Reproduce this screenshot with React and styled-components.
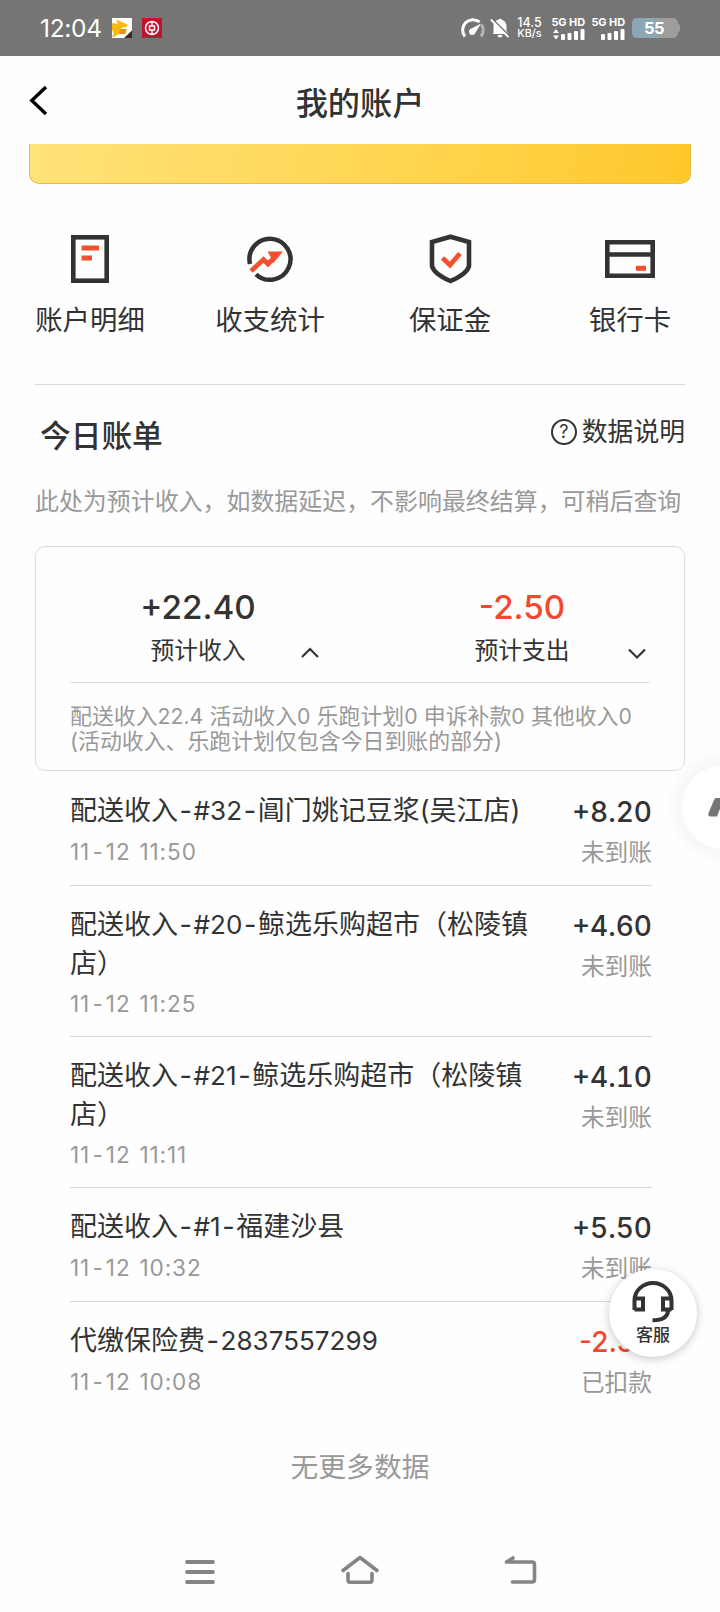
import React from 'react'
import styled, { createGlobalStyle } from 'styled-components'

const GlobalStyle = createGlobalStyle`
	* {
		box-sizing: border-box;
	}
	body {
		margin: 0;
		background: #fefefe;
		color: #333;
		font-family: Inter, 'Noto Sans CJK SC', sans-serif;
	}
	svg {
		display: block;
		flex: none;
	}
`

const Screen = styled.div`
	position: relative;
	display: flex;
	flex-direction: column;
	width: 720px;
	height: 1612px;
	overflow: hidden;
`

const StatusBar = styled.div`
	display: flex;
	align-items: center;
	flex: none;
	height: 56px;
	padding: 0 40px;
	background: #757575;
	color: #fff;
`

const Clock = styled.div`
	width: 72px;
	font-size: 24.5px;
	letter-spacing: -0.3px;
`

const AppIcons = styled.div`
	display: flex;
	gap: 10px;
	flex: 1;
`

const StatusIcons = styled.div`
	display: flex;
	align-items: center;
`

const Bell = styled.svg`
	margin-left: 5px;
`

const Speed = styled.div`
	width: 26px;
	margin: 0 9.5px 0 7px;
	font-size: 12.5px;
	font-weight: 500;
	line-height: 11px;
	text-align: center;
	white-space: nowrap;

	div + div {
		font-size: 10.8px;
	}
`

const Sim = styled.div`
	display: flex;
	flex-direction: column;
	align-items: flex-end;
	width: 33px;
	margin-right: 7px;
	font-size: 11px;
	font-weight: 700;
	letter-spacing: -0.1px;
	line-height: 11px;
	white-space: nowrap;
`

const Battery = styled.div`
	display: flex;
	align-items: center;
	justify-content: center;
	width: 46px;
	height: 20px;
	padding-right: 2px;
	border-radius: 5px;
	background: linear-gradient(90deg, #8ba7b5 55%, #9d9d9d 55%);
	font-size: 16.5px;
	font-weight: 700;
	letter-spacing: -0.5px;
`

const BatteryTip = styled.div`
	width: 2px;
	height: 8px;
	border-radius: 0 2px 2px 0;
	background: #9d9d9d;
`

const Header = styled.div`
	display: grid;
	grid-template-columns: 60px 1fr 60px;
	align-items: center;
	flex: none;
	height: 88px;
	padding: 0 28px;
`

const Title = styled.h1`
	margin: 7px 0 0;
	font-size: 32.2px;
	font-weight: 500;
	line-height: 44px;
	text-align: center;
`

const Banner = styled.div`
	flex: none;
	height: 40px;
	margin: 0 29px;
	border: 1.5px solid #e9bb45;
	border-top: 0;
	border-radius: 0 0 10px 10px;
	background: linear-gradient(100deg, #ffe27a, #ffd755 50%, #ffc82c);
`

const Menu = styled.div`
	display: grid;
	grid-template-columns: repeat(4, 180px);
	height: 154px;
	margin-top: 46px;
`

const MenuItem = styled.div`
	display: flex;
	flex-direction: column;
	align-items: center;
	font-size: 27.4px;
	line-height: 40px;

	svg {
		margin-bottom: 12px;
	}
`

const Bill = styled.div`
	margin: 0 35px;
	border-top: 1px solid #d8d8d8;
`

const BillHead = styled.div`
	display: flex;
	justify-content: space-between;
	height: 91px;
	padding: 29px 0 0 5px;
`

const BillTitle = styled.h2`
	margin: 0;
	font-size: 30.7px;
	font-weight: 500;
	line-height: 44px;
`

const Explain = styled.div`
	display: flex;
	align-items: center;
	gap: 5px;
	height: 36px;
	font-size: 25.8px;
	line-height: 36px;
`

const Question = styled.span`
	width: 26px;
	height: 26px;
	border: 2px solid #333;
	border-radius: 50%;
	font-size: 18px;
	line-height: 22px;
	text-align: center;
`

const Hint = styled.p`
	margin: 0;
	height: 70px;
	color: #999;
	font-size: 23.95px;
	line-height: 51px;
	white-space: nowrap;
`

const Summary = styled.div`
	height: 225px;
	padding: 0 34px;
	border: 1px solid #dcdcdc;
	border-radius: 10px;
`

const Totals = styled.div`
	display: grid;
	grid-template-columns: 1fr 1fr;
	height: 135px;
	margin: 0 -34px;
	padding-top: 36px;
`

const Total = styled.div`
	display: grid;
	grid-template-columns: 1fr 110px 1fr;
	grid-template-rows: 48px 34px;
	align-items: center;
	justify-items: center;
`

const TotalValue = styled.div`
	grid-column: 1 / 4;
	color: ${p => (p.$negative ? '#f1492f' : '#333')};
	font-size: 33.2px;
	font-weight: 500;
`

const TotalLabel = styled.div`
	grid-column: 2;
	font-size: 23.8px;
`

const Arrow = styled.svg`
	margin: 10px 0 0 ${p => p.$shift}px;
`

const Details = styled.div`
	padding-top: 21px;
	border-top: 1px solid #dcdcdc;
	color: #999;
	font-size: 21.9px;
	line-height: 25px;
	white-space: nowrap;
`

const List = styled.div`
	margin: 0 68px 0 70px;
	padding-top: 1px;
`

const Row = styled.div`
	display: flex;
	justify-content: space-between;
	padding: 19px 0 ${p => (p.$wrapped ? 11 : 13)}px;

	& + & {
		border-top: 1px solid #d8d8d8;
	}
`

const RowTitle = styled.div`
	width: 466px;
	font-size: 27px;
	line-height: 39px;
`

const RowTime = styled.div`
	margin-top: ${p => (p.$wrapped ? 1 : 2)}px;
	margin-bottom: ${p => (p.$wrapped ? 1 : 0)}px;
	color: #999;
	font-size: 22.6px;
	letter-spacing: 0.9px;
	line-height: 40px;
	word-spacing: 1.5px;
`

const RowSide = styled.div`
	display: flex;
	flex-direction: column;
	align-items: flex-end;
`

const Amount = styled.div`
	margin-top: 1px;
	color: ${p => (p.$negative ? '#f1492f' : '#333')};
	font-size: 28px;
	font-variant-numeric: ${p => (p.$negative ? 'normal' : 'tabular-nums')};
	font-weight: 500;
	line-height: 40px;
`

const State = styled.div`
	margin-top: 2px;
	color: #999;
	font-size: 23.7px;
	line-height: 38px;
`

const Latin = styled.span`
	font-size: ${p => p.$size}em;
`

const Dash = styled.span`
	padding: 0 ${p => p.$gap}px;
`

const NoMore = styled.div`
	margin-top: 32px;
	color: #999;
	font-size: 27.8px;
	line-height: 40px;
	text-align: center;
`

const NavBar = styled.div`
	display: flex;
	justify-content: center;
	align-items: center;
	gap: 120px;
	height: 84px;
	margin-top: auto;
`

const ServiceButton = styled.div`
	position: absolute;
	top: 1269px;
	left: 609px;
	display: flex;
	flex-direction: column;
	align-items: center;
	width: 88px;
	height: 88px;
	padding-top: 12px;
	border-radius: 50%;
	background: #fff;
	box-shadow: 0 2px 10px rgba(0, 0, 0, 0.22);
	font-size: 17px;
	font-weight: 500;
	line-height: 25px;
`

const FloatingBall = styled.div`
	position: absolute;
	top: 765px;
	left: 682px;
	width: 84px;
	height: 84px;
	padding: 32px 0 0 24px;
	border-radius: 50%;
	background: #fff;
	box-shadow: 0 0 12px 9px rgba(0, 0, 0, 0.03);
`

// digits run a little smaller than the chinese text, dashes get some air
const Mixed = ({ text, size = 1, gap = 0 }) =>
	text.split(/(-|[#0-9.:]+)/).map((part, i) => {
		if (part === '-') return <Dash key={i} $gap={gap}>-</Dash>
		return i % 2 ? <Latin key={i} $size={size}>{part}</Latin> : part
	})

const Signal = ({ arrows }) => (
	<svg width="33" height="12" viewBox="0 0 33 12" fill="#fff">
		{arrows && <path d="M1 5 4 1l3 4zM1 7.500l3 4 3-4z" />}
		<rect x="9" y="6" width="4" height="6" rx="1" />
		<rect x="15.500" y="5" width="4" height="7" rx="1" />
		<rect x="22" y="3" width="4" height="9" rx="1" />
		<rect x="28.500" y="1" width="4" height="11" rx="1" />
	</svg>
)

const Chevron = ({ up }) => (
	<Arrow $shift={up ? 7 : 13} width="20" height="14" viewBox="0 0 20 14" fill="none" stroke="#333" strokeWidth="2.2">
		<path d={up ? 'M2 11 10 3l8 8' : 'M2 3.500l8 8 8-8'} />
	</Arrow>
)

const menu = [
	{
		label: '账户明细',
		icon: (
			<>
				<rect x="8.300" y="7.300" width="33.400" height="43.400" stroke="#333" strokeWidth="4.600" />
				<path d="M16.500 18H34M16.500 28H27" stroke="#f4502f" strokeWidth="5" />
			</>
		)
	},
	{
		label: '收支统计',
		icon: (
			<>
				<path d="M5 34A20.500 20.500 0 1 1 11 44.300" stroke="#333" strokeWidth="4.500" />
				<path d="M6 41 18.500 29.500l4.500 4.500L31 26" stroke="#f4502f" strokeWidth="4.800" />
				<path d="M22.500 21.500H38L28 33.500l-1.500-5z" fill="#f4502f" />
			</>
		)
	},
	{
		label: '保证金',
		icon: (
			<>
				<path
					d="M25.500 6.700 44 12v24c-1.500 6-9 11-18.500 15C16 47 8.500 42 7 36V12z"
					stroke="#333"
					strokeWidth="4.600"
				/>
				<path d="M17.500 28l7.500 7L35 23.500" stroke="#f4502f" strokeWidth="4.800" />
			</>
		)
	},
	{
		label: '银行卡',
		icon: (
			<>
				<path d="M2.300 12.300h45.400v33.400H2.300zM2.300 24.500h45.400" stroke="#333" strokeWidth="4.600" />
				<path d="M31 38.300h10" stroke="#f4502f" strokeWidth="5" />
			</>
		)
	}
]

const rows = [
	{ title: '配送收入-#32-阊门姚记豆浆(吴江店)', time: '11-12 11:50', amount: '+8.20', state: '未到账' },
	{ title: '配送收入-#20-鲸选乐购超市（松陵镇店）', time: '11-12 11:25', amount: '+4.60', state: '未到账', wrapped: true },
	{ title: '配送收入-#21-鲸选乐购超市（松陵镇店）', time: '11-12 11:11', amount: '+4.10', state: '未到账', wrapped: true },
	{ title: '配送收入-#1-福建沙县', time: '11-12 10:32', amount: '+5.50', state: '未到账' },
	{ title: '代缴保险费-2837557299', time: '11-12 10:08', amount: '-2.50', state: '已扣款' }
]

const App = () => (
	<Screen>
		<GlobalStyle />
		<StatusBar>
			<Clock>12:04</Clock>
			<AppIcons>
				<svg width="20" height="20" viewBox="0 0 20 20">
					<path d="M0 0h20v20H0z" fill="#fff" />
					<path d="M0 5l6 1-2-4.500 6 2.500 6 3-1.500 2L9 10l-2 6-5 3H0l2-4-2-3z" fill="#f9b90a" />
					<path d="M8 11h6.500l-1 5H7z" fill="#ee8d13" />
					<path d="M20 12.500V20h-8z" fill="#3b2a20" />
				</svg>
				<svg width="20" height="20" viewBox="0 0 20 20" fill="none" stroke="#fff" strokeWidth="1.500">
					<path d="M0 0h20v20H0z" fill="#c0132c" stroke="none" />
					<circle cx="10" cy="10" r="6.500" />
					<path d="M7.500 8h5v4h-5zM10 3.500V8M10 12v4.500" />
				</svg>
			</AppIcons>
			<StatusIcons>
				<svg width="24" height="20" viewBox="0 0 24 20" fill="none" strokeWidth="3">
					<path d="M4 18.500A10.300 10.300 0 0 1 18.500 4" stroke="#fff" />
					<path d="M20.500 6.500a10.300 10.300 0 0 1-.5 12" stroke="#b5b5b5" />
					<path d="M20 5.500 14.500 14.500a3.300 3.300 0 1 1-4-4z" fill="#fff" />
				</svg>
				<Bell width="20" height="22" viewBox="0 0 20 22">
					<path d="M3.500 16V9c0-3 2-5.500 4.800-6.200a2 2 0 0 1 3.500 0C14.500 3.500 16.500 6 16.500 9v5l2 3H2.500z" fill="#fff" />
					<path d="M7.500 18h5a2.500 2.500 0 0 1-5 0z" fill="#fff" />
					<path d="M2 1.500 20 19.500" stroke="#757575" strokeWidth="1.600" />
					<path d="M.8 2.500 18.500 20.200" stroke="#fff" strokeWidth="1.800" />
				</Bell>
				<Speed>
					<div>14.5</div>
					<div>KB/s</div>
				</Speed>
				<Sim>
					5G HD
					<Signal arrows />
				</Sim>
				<Sim>
					5G HD
					<Signal />
				</Sim>
				<Battery>55</Battery>
				<BatteryTip />
			</StatusIcons>
		</StatusBar>
		<Header>
			<svg width="22" height="32" viewBox="0 0 22 32" fill="none" stroke="#000" strokeWidth="3.400">
				<path d="M18 3 3.800 16.500 18 30" />
			</svg>
			<Title>我的账户</Title>
		</Header>
		<Banner />
		<Menu>
			{menu.map(({ label, icon }) => (
				<MenuItem key={label}>
					<svg width="50" height="58" viewBox="0 0 50 58" fill="none">
						{icon}
					</svg>
					{label}
				</MenuItem>
			))}
		</Menu>
		<Bill>
			<BillHead>
				<BillTitle>今日账单</BillTitle>
				<Explain>
					<Question>?</Question>
					数据说明
				</Explain>
			</BillHead>
			<Hint>此处为预计收入，如数据延迟，不影响最终结算，可稍后查询</Hint>
			<Summary>
				<Totals>
					<Total>
						<TotalValue>+22.40</TotalValue>
						<TotalLabel>预计收入</TotalLabel>
						<Chevron up />
					</Total>
					<Total>
						<TotalValue $negative>-2.50</TotalValue>
						<TotalLabel>预计支出</TotalLabel>
						<Chevron />
					</Total>
				</Totals>
				<Details>
					<div>
						<Mixed text="配送收入22.4 活动收入0 乐跑计划0 申诉补款0 其他收入0" size={0.97} />
					</div>
					<div>(活动收入、乐跑计划仅包含今日到账的部分)</div>
				</Details>
			</Summary>
		</Bill>
		<List>
			{rows.map(row => (
				<Row key={row.time} $wrapped={row.wrapped}>
					<div>
						<RowTitle>
							<Mixed text={row.title} size={0.965} gap={1.6} />
						</RowTitle>
						<RowTime $wrapped={row.wrapped}>
							<Mixed text={row.time} gap={2.2} />
						</RowTime>
					</div>
					<RowSide>
						<Amount $negative={row.amount.startsWith('-')}>{row.amount}</Amount>
						<State>{row.state}</State>
					</RowSide>
				</Row>
			))}
		</List>
		<NoMore>无更多数据</NoMore>
		<NavBar>
			<svg width="40" height="32" viewBox="0 0 40 32" fill="none" stroke="#858585" strokeWidth="3.800" strokeLinecap="round">
				<path d="M7 8h26M7 18h26M7 28h26" />
			</svg>
			<svg width="40" height="32" viewBox="0 0 40 32" fill="none" stroke="#858585" strokeWidth="3.600" strokeLinecap="round" strokeLinejoin="round">
				<path d="M3 16.500 20 3.500l17 13M8 19.500V26q0 2.200 2.200 2.200h19.600q2.200 0 2.200-2.200v-6.500" />
			</svg>
			<svg width="40" height="32" viewBox="0 0 40 32" fill="none" stroke="#858585" strokeWidth="3.600" strokeLinecap="round" strokeLinejoin="round">
				<path d="M13 4 6.500 8H32q2.500 0 2.500 2.500v15Q34.500 28 32 28H12.500" />
			</svg>
		</NavBar>
		<ServiceButton>
			<svg width="42" height="42" viewBox="0 0 42 42" fill="none" stroke="#333" strokeWidth="4">
				<path d="M2.500 29V19.500a18.500 17.500 0 0 1 37 0V29M2.500 17.500H11v11H2.500M39.500 17.500H31v11h8.500M36 29c0 7-6 10.300-15.500 10.300" />
			</svg>
			客服
		</ServiceButton>
		<FloatingBall>
			<svg width="34" height="22" viewBox="0 0 34 22" fill="#757575">
				<path d="M10 1H20V12L15 9 11 19.500H4.500Q1.500 19.500 2.500 16L8 3Q9 1 10 1z" />
			</svg>
		</FloatingBall>
	</Screen>
)

export default App
